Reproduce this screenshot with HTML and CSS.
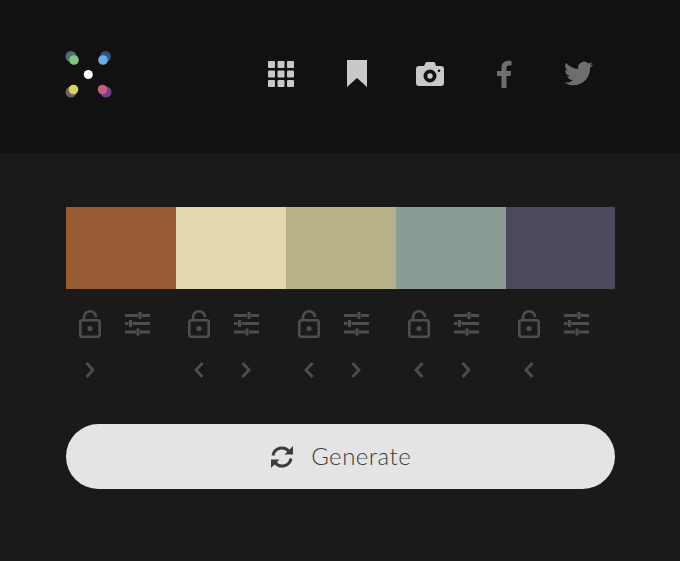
FILE: index.html
```html
<!DOCTYPE html>
<html lang="en">
<head>
<meta charset="UTF-8">
<meta name="viewport" content="width=device-width, initial-scale=1.0">
<title>Palette Generator</title>
<link rel="stylesheet" href="styles.css">
</head>
<body>
  <svg class="defs" aria-hidden="true">
    <symbol id="lock" viewBox="0 0 24 28">
      <rect x="2.300" y="10.300" width="19.400" height="16.400" rx="2" fill="none" stroke="currentColor" stroke-width="2.600"/>
      <path d="M6 10V7a6 5.700 0 0 1 12 0v.2" fill="none" stroke="currentColor" stroke-width="2.600"/>
      <circle cx="12" cy="18.500" r="2.600" fill="currentColor"/>
    </symbol>
    <symbol id="sliders" viewBox="0 0 26 24">
      <path d="M0 3.500h13M17 3.500h8M15 0v7M0 11.500h3.500M7.500 11.500h17.500M5.500 8v7M0 20h11M15 20h10M13 16.500v7" fill="none" stroke="currentColor" stroke-width="3"/>
    </symbol>
    <symbol id="prev" viewBox="0 0 12 18">
      <path d="M9.500 2 3 9l6.500 7" fill="none" stroke="currentColor" stroke-width="2.800"/>
    </symbol>
    <symbol id="next" viewBox="0 0 12 18">
      <path d="M2.500 2 9 9l-6.500 7" fill="none" stroke="currentColor" stroke-width="2.800"/>
    </symbol>
  </svg>

  <header class="header">
    <svg class="logo" viewBox="64 50 48 48" width="48" height="48">
      <circle cx="71" cy="56.500" r="5.500" fill="#4f6f78"/>
      <circle cx="74" cy="60" r="4.800" fill="#7fc77f"/>
      <circle cx="105.500" cy="56.500" r="5.500" fill="#34507e"/>
      <circle cx="103" cy="60" r="4.800" fill="#69aee6"/>
      <circle cx="71" cy="92" r="5.500" fill="#6d6260"/>
      <circle cx="73.500" cy="89.500" r="4.800" fill="#d6d25c"/>
      <circle cx="106" cy="92" r="5.500" fill="#74408c"/>
      <circle cx="102.500" cy="89.500" r="4.800" fill="#c75c85"/>
      <circle cx="88.300" cy="74.500" r="4.500" fill="#fff"/>
    </svg>
    <nav class="nav">
      <a class="nav-item light pull" href="#" aria-label="Palettes">
        <svg width="26" height="26" viewBox="0 0 26 26" fill="currentColor">
          <rect x="0" y="0" width="7" height="7" rx="1"/><rect x="9.500" y="0" width="7" height="7" rx="1"/><rect x="19" y="0" width="7" height="7" rx="1"/>
          <rect x="0" y="9.500" width="7" height="7" rx="1"/><rect x="9.500" y="9.500" width="7" height="7" rx="1"/><rect x="19" y="9.500" width="7" height="7" rx="1"/>
          <rect x="0" y="19" width="7" height="7" rx="1"/><rect x="9.500" y="19" width="7" height="7" rx="1"/><rect x="19" y="19" width="7" height="7" rx="1"/>
        </svg>
      </a>
      <a class="nav-item light nudge" href="#" aria-label="Bookmark">
        <svg width="20" height="27" viewBox="0 0 20 27" fill="currentColor"><path d="M0 0h20v27l-10-9L0 27z"/></svg>
      </a>
      <a class="nav-item light" href="#" aria-label="Screenshot">
        <svg width="28" height="24" viewBox="0 0 28 24" fill="currentColor"><path fill-rule="evenodd" d="M3 4h5l1.500-3a2 2 0 0 1 1.800-1h6a2 2 0 0 1 1.800 1L20 4h5a3 3 0 0 1 3 3v14a3 3 0 0 1-3 3H3a3 3 0 0 1-3-3V7a3 3 0 0 1 3-3zm11 3.500a6.500 6.500 0 1 0 0 13 6.500 6.500 0 0 0 0-13zm0 3.800a2.700 2.700 0 1 1 0 5.400 2.700 2.700 0 0 1 0-5.400zm9-3.800a1.300 1.300 0 1 0 0 2.600 1.300 1.300 0 0 0 0-2.600z"/></svg>
      </a>
      <a class="nav-item dim pull" href="#" aria-label="Facebook">
        <svg width="16" height="28" viewBox="0 0 16 28" fill="currentColor"><path d="M10.500 28V16h4l.7-5h-4.700V8c0-1.500.5-2.500 2.500-2.500h2.500V1c-.6-.1-2-.2-3.600-.2C8.700.8 5.500 3 5.500 7.500V11H1v5h4.500v12z"/></svg>
      </a>
      <a class="nav-item dim" href="#" aria-label="Twitter">
        <svg width="29" height="29" viewBox="0 0 24 24" fill="currentColor"><path d="M23.953 4.570a10 10 0 0 1-2.825.775 4.958 4.958 0 0 0 2.163-2.723c-.951.555-2.005.959-3.127 1.184a4.920 4.920 0 0 0-8.384 4.482C7.690 8.095 4.067 6.130 1.640 3.162a4.822 4.822 0 0 0-.666 2.475c0 1.710.870 3.213 2.188 4.096a4.904 4.904 0 0 1-2.228-.616v.060a4.923 4.923 0 0 0 3.946 4.827 4.996 4.996 0 0 1-2.212.085 4.936 4.936 0 0 0 4.604 3.417 9.867 9.867 0 0 1-6.102 2.105c-.390 0-.779-.023-1.170-.067a13.995 13.995 0 0 0 7.557 2.209c9.053 0 13.998-7.496 13.998-13.985 0-.210 0-.420-.015-.630A9.935 9.935 0 0 0 24 4.590z"/></svg>
      </a>
    </nav>
  </header>

  <main class="main">
    <div class="palette">
      <div class="column">
        <div class="swatch swatch-1"></div>
        <div class="tools">
          <svg class="ico-lock"><use href="#lock"/></svg>
          <svg class="ico-sliders"><use href="#sliders"/></svg>
        </div>
        <div class="moves">
          <svg class="ico-arrow"><use href="#next"/></svg>
        </div>
      </div>
      <div class="column">
        <div class="swatch swatch-2"></div>
        <div class="tools">
          <svg class="ico-lock"><use href="#lock"/></svg>
          <svg class="ico-sliders"><use href="#sliders"/></svg>
        </div>
        <div class="moves">
          <svg class="ico-arrow"><use href="#prev"/></svg>
          <svg class="ico-arrow"><use href="#next"/></svg>
        </div>
      </div>
      <div class="column">
        <div class="swatch swatch-3"></div>
        <div class="tools">
          <svg class="ico-lock"><use href="#lock"/></svg>
          <svg class="ico-sliders"><use href="#sliders"/></svg>
        </div>
        <div class="moves">
          <svg class="ico-arrow"><use href="#prev"/></svg>
          <svg class="ico-arrow"><use href="#next"/></svg>
        </div>
      </div>
      <div class="column">
        <div class="swatch swatch-4"></div>
        <div class="tools">
          <svg class="ico-lock"><use href="#lock"/></svg>
          <svg class="ico-sliders"><use href="#sliders"/></svg>
        </div>
        <div class="moves">
          <svg class="ico-arrow"><use href="#prev"/></svg>
          <svg class="ico-arrow"><use href="#next"/></svg>
        </div>
      </div>
      <div class="column">
        <div class="swatch swatch-5"></div>
        <div class="tools">
          <svg class="ico-lock"><use href="#lock"/></svg>
          <svg class="ico-sliders"><use href="#sliders"/></svg>
        </div>
        <div class="moves">
          <svg class="ico-arrow"><use href="#prev"/></svg>
        </div>
      </div>
    </div>

    <button class="generate">
      <svg width="24" height="24" viewBox="0 0 24 24" fill="none">
        <path d="M3 10.500A9 9 0 0 1 19 6.500" stroke="currentColor" stroke-width="3"/>
        <path d="M21 13.500A9 9 0 0 1 5 17.500" stroke="currentColor" stroke-width="3"/>
        <path d="M23 1v8.500h-8.500zM1 23v-8.500h8.500z" fill="currentColor"/>
      </svg>
      <span class="generate-label">Generate</span>
    </button>
  </main>
</body>
</html>
```

FILE: styles.css
```css
body {
  margin: 0;
  height: 561px;
  overflow: hidden;
  background-color: #1a1a1a;
  font-family: Lato, "Open Sans", sans-serif;
}
.defs {
  display: none;
}
.header {
  display: flex;
  justify-content: space-between;
  align-items: center;
  height: 153px;
  box-sizing: border-box;
  padding: 0 64px 6px 64px;
  background-color: #111;
}
.logo {
  display: block;
}
.nav {
  display: grid;
  grid-template-columns: repeat(5, 74.25px);
}
.nav-item {
  display: flex;
  justify-content: center;
  align-items: center;
  height: 30px;
}
.nudge {
  padding-left: 2px;
}
.pull {
  padding-right: 2px;
}
.light {
  color: #c9c9c9;
}
.dim {
  color: #6e6e6e;
}
.main {
  padding: 54px 64.6px 0 66px;
}
.palette {
  display: grid;
  grid-template-columns: repeat(5, 1fr);
}
.swatch {
  height: 82px;
}
.swatch-1 { background-color: #975b33; }
.swatch-2 { background-color: #e4d8ae; }
.swatch-3 { background-color: #b8b086; }
.swatch-4 { background-color: #8a9c94; }
.swatch-5 { background-color: #4a4a5b; }
.tools {
  display: flex;
  align-items: center;
  gap: 23px;
  height: 30px;
  margin-top: 20px;
  padding-left: 11.5px;
  color: #4e4e4e;
}
.ico-lock {
  width: 24px;
  height: 28px;
}
.ico-sliders {
  width: 26px;
  height: 24px;
}
.moves {
  display: flex;
  align-items: center;
  gap: 35px;
  height: 18px;
  margin-top: 22px;
  padding-left: 17.5px;
  color: #4e4e4e;
}
.ico-arrow {
  width: 12px;
  height: 18px;
}
.generate {
  display: flex;
  justify-content: center;
  align-items: center;
  gap: 17px;
  width: 100%;
  height: 65px;
  margin-top: 45px;
  padding: 0;
  border: none;
  border-radius: 33px;
  background-color: #e4e4e4;
  color: #3c3c3c;
  font-family: inherit;
  font-size: 24px;
  font-weight: 300;
}
.generate-label {
  letter-spacing: 0.5px;
  padding-bottom: 2px;
}
```
